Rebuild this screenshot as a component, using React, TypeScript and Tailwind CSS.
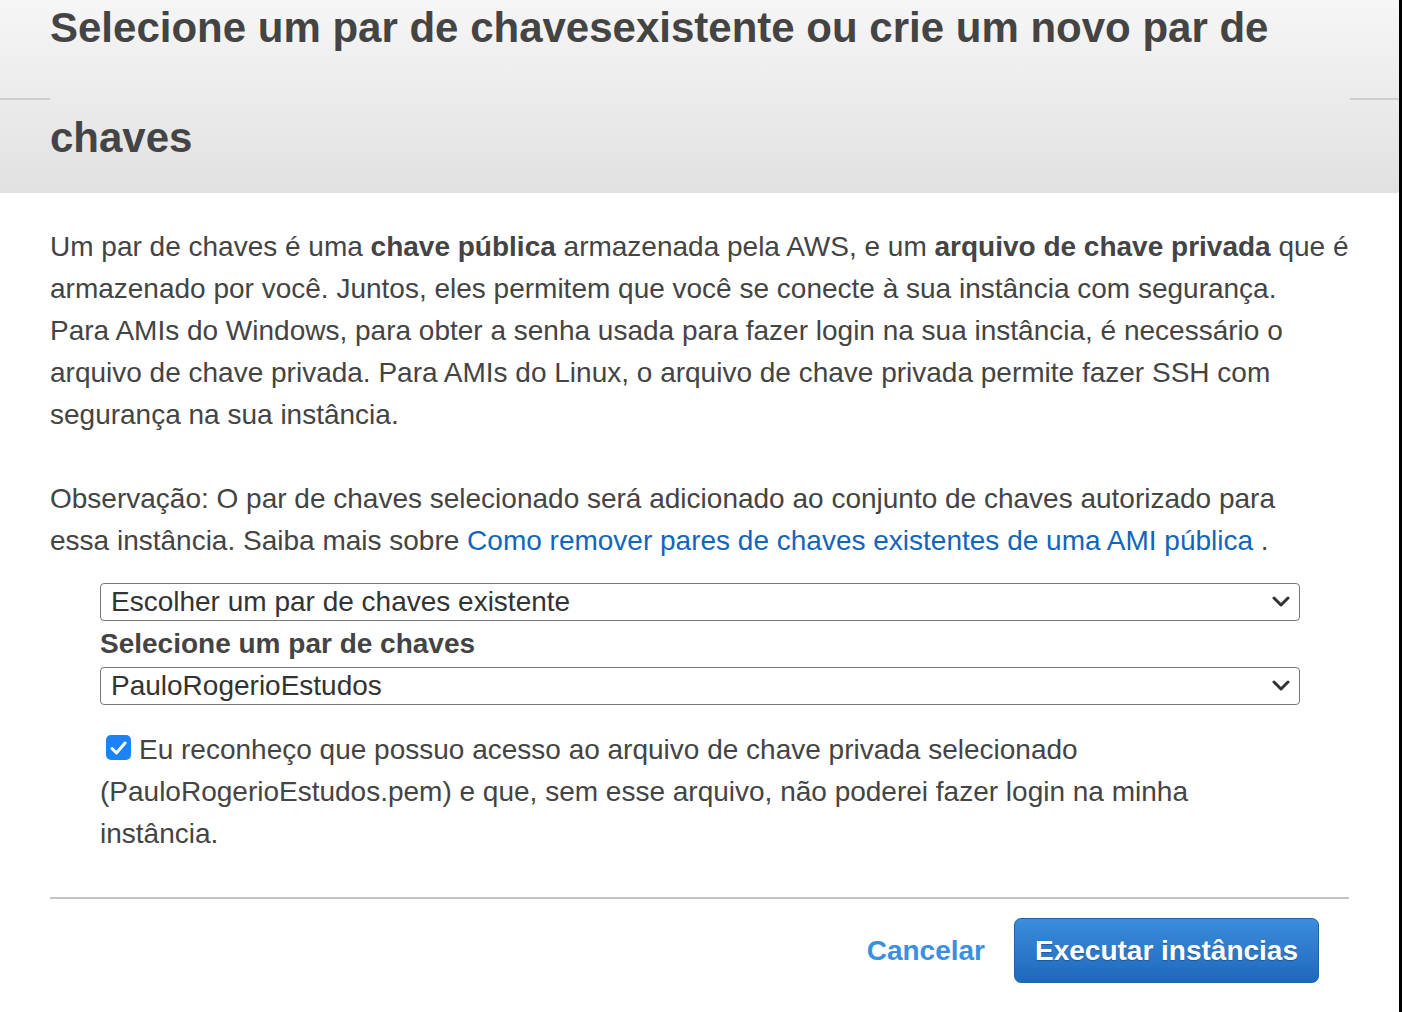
import React from 'react';

const Chevron: React.FC = () => (
  <svg width="20" height="12" viewBox="0 0 20 12" className="shrink-0">
    <polyline points="3,2 10,9 17,2" fill="none" stroke="#333" strokeWidth="3" strokeLinecap="round" strokeLinejoin="round" />
  </svg>
);

const FakeSelect: React.FC<{ value: string }> = ({ value }) => (
  <div className="flex h-[38px] w-[1200px] items-center justify-between rounded-[4px] border border-[#777] bg-white pl-[10px] pr-[8px]">
    <span className="text-[28px] leading-none text-[#333]">{value}</span>
    <Chevron />
  </div>
);

const App: React.FC = () => {
  return (
    <div className="flex h-[1012px] w-[1402px] overflow-hidden bg-white font-['Liberation_Sans',Arial,sans-serif] text-[#444]">
      <div className="flex w-[1399px] flex-col">
        {/* Header */}
        <div className="grid h-[193px] shrink-0 grid-cols-[50px_1300px_49px] overflow-hidden bg-gradient-to-b from-[#f6f6f6] to-[#e1e1e1]">
          <div className="mt-[98px] h-0 border-t-2 border-[#cfcfcf]" />
          <div className="flex flex-col border-b-2 border-[#cfcfcf]">
            <h2 className="mt-[-27px] text-[42px] font-bold leading-[110px] text-[#444]">
              Selecione um par de chavesexistente ou crie um novo par de
              <br />
              chaves
            </h2>
          </div>
          <div className="mt-[98px] h-0 border-t-2 border-[#cfcfcf]" />
        </div>

        {/* Body */}
        <div className="flex flex-col px-[50px]">
          <p className="mt-[33px] whitespace-nowrap text-[28px] leading-[42px]">
            Um par de chaves é uma <b>chave pública</b> armazenada pela AWS, e um <b>arquivo de chave privada</b> que é
            <br />
            armazenado por você. Juntos, eles permitem que você se conecte à sua instância com segurança.
            <br />
            Para AMIs do Windows, para obter a senha usada para fazer login na sua instância, é necessário o
            <br />
            arquivo de chave privada. Para AMIs do Linux, o arquivo de chave privada permite fazer SSH com
            <br />
            segurança na sua instância.
          </p>
          <p className="mt-[42px] whitespace-nowrap text-[28px] leading-[42px]">
            Observação: O par de chaves selecionado será adicionado ao conjunto de chaves autorizado para
            <br />
            essa instância. Saiba mais sobre <a className="text-[#1166bb]">Como remover pares de chaves existentes de uma AMI pública</a> .
          </p>

          <div className="mt-[21px] flex flex-col pl-[50px]">
            <FakeSelect value="Escolher um par de chaves existente" />
            <div className="flex h-[46px] items-center text-[28px] font-bold text-[#444]">Selecione um par de chaves</div>
            <FakeSelect value="PauloRogerioEstudos" />
            <div className="mt-[24px] whitespace-nowrap text-[28px] leading-[42px]">
              <span className="mr-[8px] ml-[6px] inline-flex h-[25px] w-[25px] translate-y-[-4px] items-center justify-center rounded-[5px] bg-[#1a82fb] align-middle">
                <svg width="17" height="14" viewBox="0 0 17 14">
                  <polyline points="2,7.5 6.5,12 15,2" fill="none" stroke="white" strokeWidth="3" strokeLinecap="round" strokeLinejoin="round" />
                </svg>
              </span>
              Eu reconheço que possuo acesso ao arquivo de chave privada selecionado
              <br />
              (PauloRogerioEstudos.pem) e que, sem esse arquivo, não poderei fazer login na minha
              <br />
              instância.
            </div>
          </div>

          <div className="mt-[42px] border-t-2 border-[#c4c4c4]" />

          <div className="mt-[19px] flex items-center justify-end pr-[30px]">
            <a className="mr-[29px] text-[28px] font-bold text-[#3b8fdf]">Cancelar</a>
            <button className="h-[65px] w-[305px] rounded-[7px] border border-[#1d62ad] bg-gradient-to-b from-[#3c8ddc] to-[#1e68bb] text-[28px] font-bold text-white [text-shadow:0_1px_1px_rgba(0,0,0,0.25)]">
              Executar instâncias
            </button>
          </div>
        </div>
      </div>
      <div className="w-[3px] bg-black" />
    </div>
  );
};

export default App;
